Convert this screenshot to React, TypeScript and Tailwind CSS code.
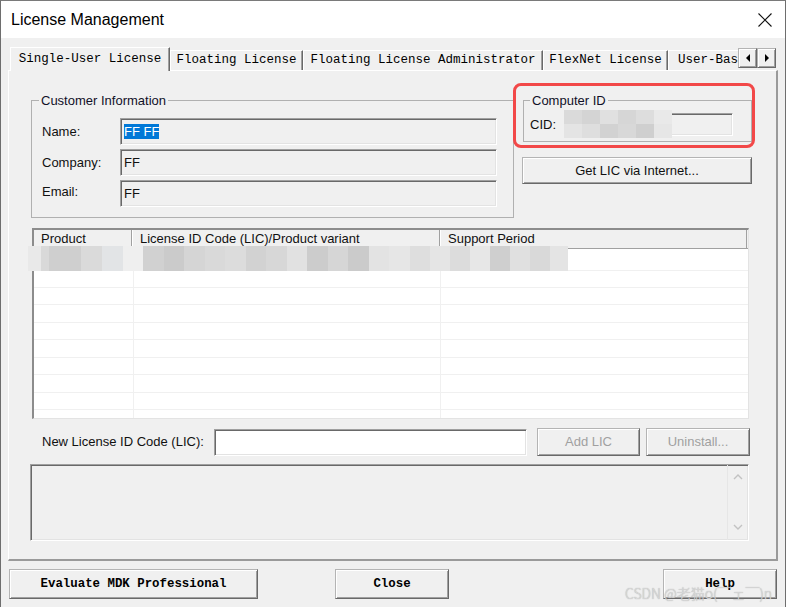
import React from "react";

const raised =
  "border border-t-[#b4b4b4] border-l-[#b4b4b4] border-r-[#696969] border-b-[#696969] shadow-[inset_1px_1px_0_#ffffff,inset_-1px_-1px_0_#a0a0a0] bg-[#f0f0f0]";
const sunken =
  "border border-t-[#a0a0a0] border-l-[#a0a0a0] border-r-white border-b-white shadow-[inset_1px_1px_0_#696969,inset_-1px_-1px_0_#e3e3e3]";

const listBlocks: [number, number, string][] = [
  [28, 41, "#e9e9e9"], [41, 49, "#d9d9d9"], [49, 81, "#cfcfcf"], [81, 102, "#dadada"],
  [102, 123, "#e2e4e6"], [123, 143, "#efefef"], [143, 164, "#d1d1d1"], [164, 184, "#cbcbcb"],
  [184, 205, "#d5d5d5"], [205, 225, "#d9d9d9"], [225, 246, "#dcdcdc"], [246, 266, "#d2d2d2"],
  [266, 287, "#d7d7d7"], [287, 307, "#e1e1e1"], [307, 328, "#cccccc"], [328, 348, "#d6d6d6"],
  [348, 369, "#cbcbcb"], [369, 389, "#e3e3e3"], [389, 410, "#e6e6e6"], [410, 430, "#dedede"],
  [430, 450, "#e5e5e5"], [450, 470, "#dcdcdc"], [470, 490, "#e7e7e7"], [490, 510, "#cfcfcf"],
  [510, 530, "#e0e0e0"], [530, 550, "#d9d9d9"], [550, 568, "#e4e4e4"],
];

const cidTop = ["#dadada", "#d4d4d4", "#e0e0e0", "#d6d6d6", "#dddddd", "#e9e9e9"];
const cidBottom = ["#e4e4e4", "#dedede", "#d2d2d2", "#d8d8d8", "#cfcfcf", "#e6e6e6"];

const rowClasses = [
  "h-[22px]", "h-[17px]", "h-[17px]", "h-[18px]", "h-[17px]",
  "h-[18px]", "h-[17px]", "h-[18px]", "h-[17px]",
];

function Row({ cls }: { cls: string }) {
  return (
    <div className={`flex shrink-0 border-b border-b-[#f0f0f0] ${cls}`}>
      <div className="w-[100px] border-r border-r-[#f0f0f0]" />
      <div className="w-[307px] border-r border-r-[#f0f0f0]" />
      <div className="flex-1" />
    </div>
  );
}

export default function App() {
  return (
    <div className="relative w-[786px] h-[607px] overflow-hidden bg-[#f0f0f0] border-t border-l border-r border-t-[#7a7a7a] border-l-[#6e6e6e] border-r-[#6e6e6e] font-['Liberation_Sans',Arial,sans-serif] text-[13px] text-[#111]">
      {/* Title bar */}
      <div className="h-[37px] bg-white flex items-center justify-between pl-[10px] pr-[13px]">
        <span className="text-[16px] text-black leading-none">License Management</span>
        <svg width="14" height="14" viewBox="0 0 14 14">
          <path d="M0.5 0.5 L13.5 13.5 M13.5 0.5 L0.5 13.5" stroke="#111" strokeWidth="1.1" fill="none" />
        </svg>
      </div>

      {/* Tabs */}
      <div className="h-[32px] flex items-end pl-[9px] font-['Liberation_Mono',monospace] text-[12.5px] text-black whitespace-nowrap">
        <div className="relative z-10 -mb-px h-[24px] w-[160px] bg-[#f0f0f0] border-t border-l border-r border-t-white border-l-white border-r-[#696969] shadow-[inset_-1px_0_0_#a0a0a0] flex items-center justify-center">
          Single-User License
        </div>
        <div className="h-[20px] w-[133px] border-t border-l border-r border-t-white border-l-white border-r-[#696969] shadow-[inset_-1px_0_0_#a0a0a0] flex items-center justify-center">
          Floating License
        </div>
        <div className="h-[20px] w-[240px] border-t border-l border-r border-t-white border-l-white border-r-[#696969] shadow-[inset_-1px_0_0_#a0a0a0] flex items-center justify-center">
          Floating License Administrator
        </div>
        <div className="h-[20px] w-[125px] border-t border-l border-r border-t-white border-l-white border-r-[#696969] shadow-[inset_-1px_0_0_#a0a0a0] flex items-center justify-center">
          FlexNet License
        </div>
        <div className="h-[20px] w-[70px] overflow-hidden border-t border-l border-t-white border-l-white flex items-center pl-[9px]">
          User-Based License
        </div>
        <div className="mb-[2px] flex">
          <div className={`w-[19px] h-[20px] flex items-center justify-center ${raised}`}>
            <svg width="6" height="8" viewBox="0 0 6 8"><path d="M5 0 L5 8 L1 4 Z" fill="#000" /></svg>
          </div>
          <div className={`w-[19px] h-[20px] flex items-center justify-center ${raised}`}>
            <svg width="6" height="8" viewBox="0 0 6 8"><path d="M1 0 L1 8 L5 4 Z" fill="#000" /></svg>
          </div>
        </div>
      </div>

      {/* Panel */}
      <div className="ml-[7px] w-[770px] h-[491px] border-t border-l border-r-2 border-b-2 border-t-white border-l-white border-r-[#9a9a9a] border-b-[#9a9a9a] flex flex-col">
        {/* Row 1 */}
        <div className="flex mt-[22px] ml-[22px]">
          <fieldset className="w-[483px] border border-[#b0b0b0] px-0">
            <legend className="ml-[7px] px-[2px] leading-[15px] text-[#101028]">Customer Information</legend>
            <div className="pt-[10px] pb-[10px] pl-[10px] flex flex-col gap-[4px]">
              <div className="flex items-center h-[27px]">
                <div className="w-[78px]">Name:</div>
                <div className={`w-[377px] h-[27px] flex items-center pl-[3px] ${sunken}`}>
                  <span className="bg-[#0078d7] text-white leading-[15px]">FF FF</span>
                </div>
              </div>
              <div className="flex items-center h-[27px]">
                <div className="w-[78px]">Company:</div>
                <div className={`w-[377px] h-[27px] flex items-center pl-[3px] ${sunken}`}>FF</div>
              </div>
              <div className="flex items-center h-[27px]">
                <div className="w-[78px] -mt-[4px]">Email:</div>
                <div className={`w-[377px] h-[27px] flex items-center pl-[3px] ${sunken}`}>FF</div>
              </div>
            </div>
          </fieldset>

          <div className="ml-[8px] w-[231px] flex flex-col">
            <fieldset className="ml-[1px] w-[229px] border border-[#b0b0b0] px-0">
              <legend className="ml-[6px] px-[2px] leading-[15px] text-[#101028]">Computer ID</legend>
              <div className="pt-[5px] pb-[5px] pl-[6px] flex items-center h-[33px]">
                <div className="w-[34px]">CID:</div>
                <div className={`relative w-[169px] h-[23px] ${sunken}`}>
                  <svg className="absolute left-[-1px] top-[-4px]" width="108" height="28" viewBox="0 0 108 28">
                    {cidTop.map((c, i) => (
                      <rect key={"t" + i} x={i * 18} y={0} width={18} height={14} fill={c} />
                    ))}
                    {cidBottom.map((c, i) => (
                      <rect key={"b" + i} x={i * 18} y={14} width={18} height={14} fill={c} />
                    ))}
                  </svg>
                </div>
              </div>
            </fieldset>
            <div className={`mt-[15px] w-[230px] h-[27px] flex items-center justify-center ${raised}`}>
              Get LIC via Internet...
            </div>
          </div>
        </div>

        {/* List view */}
        <div className="relative mt-[10px] ml-[23px] w-[717px] h-[191px] bg-white border-t-2 border-l-2 border-r border-b border-t-[#8c8c8c] border-l-[#8c8c8c] border-r-[#e3e3e3] border-b-[#e3e3e3] flex flex-col overflow-visible">
          <div className="flex h-[19px] shrink-0 bg-[#f0f0f0] border-b border-b-[#a0a0a0]">
            <div className="w-[98px] pl-[7px] flex items-center border-r border-r-[#a0a0a0]">Product</div>
            <div className="w-[308px] pl-[8px] flex items-center border-r border-r-[#a0a0a0] shadow-[inset_1px_0_0_#ffffff]">
              License ID Code (LIC)/Product variant
            </div>
            <div className="w-[307px] pl-[8px] flex items-center border-r border-r-[#a0a0a0] shadow-[inset_1px_0_0_#ffffff]">
              Support Period
            </div>
          </div>
          {rowClasses.map((c, i) => (
            <Row key={i} cls={c} />
          ))}
          <div className="flex flex-1">
            <div className="w-[100px] border-r border-r-[#f0f0f0]" />
            <div className="w-[307px] border-r border-r-[#f0f0f0]" />
            <div className="flex-1" />
          </div>
          <svg className="absolute left-[-6px] top-[16px]" width="540" height="25" viewBox="0 0 540 25">
            {listBlocks.map(([a, b, c], i) => (
              <rect key={i} x={a - 28} y={0} width={b - a} height={25} fill={c} />
            ))}
          </svg>
        </div>

        {/* New LIC row */}
        <div className="mt-[9px] ml-[33px] flex items-center h-[28px]">
          <div className="w-[172px]">New License ID Code (LIC):</div>
          <div className={`w-[313px] h-[27px] bg-white ${sunken}`} />
          <div className={`ml-[10px] w-[103px] h-[28px] flex items-center justify-center text-[#a0a0a0] ${raised}`}>
            Add LIC
          </div>
          <div className={`ml-[6px] w-[104px] h-[28px] flex items-center justify-center text-[#a0a0a0] ${raised}`}>
            Uninstall...
          </div>
        </div>

        {/* Memo */}
        <div className={`mt-[8px] ml-[21px] w-[719px] h-[77px] flex ${sunken}`}>
          <div className="flex-1" />
          <div className="w-[21px] border-l border-l-[#e6e6e6] flex flex-col items-center justify-between pt-[9px] pb-[10px]">
            <svg width="10" height="6" viewBox="0 0 10 6">
              <path d="M1 5 L5 1 L9 5" stroke="#c2c2c2" strokeWidth="1.4" fill="none" />
            </svg>
            <svg width="10" height="6" viewBox="0 0 10 6">
              <path d="M1 1 L5 5 L9 1" stroke="#c2c2c2" strokeWidth="1.4" fill="none" />
            </svg>
          </div>
        </div>
      </div>

      {/* Bottom buttons */}
      <div className="mt-[8px] pl-[8px] flex font-['Liberation_Mono',monospace] text-[12.4px] font-bold text-black">
        <div className={`w-[249px] h-[30px] flex items-center justify-center ${raised}`}>Evaluate MDK Professional</div>
        <div className={`ml-[77px] w-[114px] h-[30px] flex items-center justify-center ${raised}`}>Close</div>
        <div className={`ml-[214px] w-[114px] h-[30px] flex items-center justify-center ${raised}`}>Help</div>
      </div>

      {/* Red annotation rectangle */}
      <div className="absolute left-[512px] top-[82px] w-[242px] h-[65px] border-[3px] border-[#f24848] rounded-[8px]" />

      {/* Watermark */}
      <div className="absolute left-[624px] top-[585px] text-[14px] font-light font-['Noto_Sans_CJK_SC',sans-serif] text-[#dadada] [text-shadow:0_0_1px_#9a9a9a] whitespace-nowrap leading-none">
        CSDN @老猫o(￣ェ￣)n
      </div>
    </div>
  );
}
